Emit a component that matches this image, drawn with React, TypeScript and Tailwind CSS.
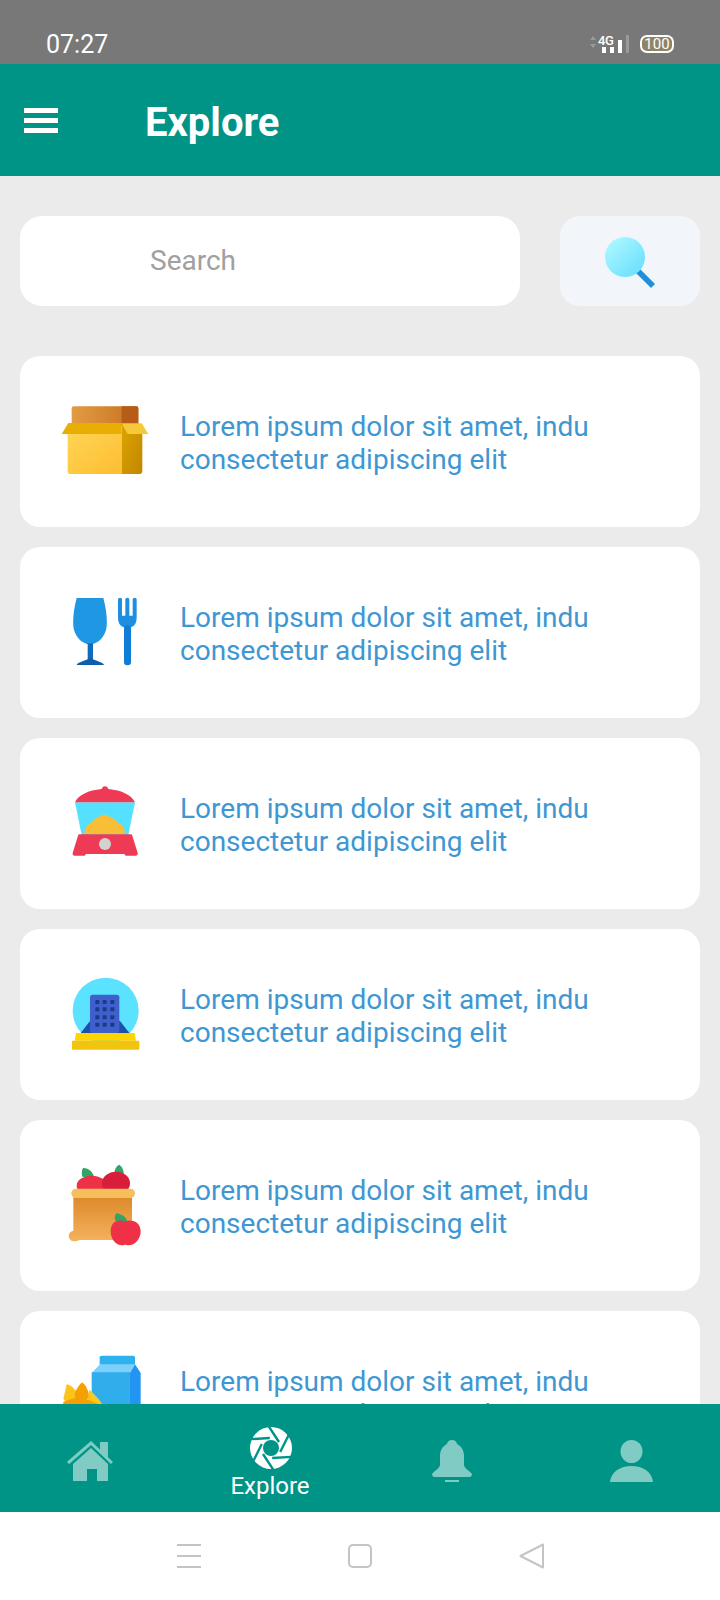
import { FC, ReactNode } from "react";

const LOREM_1 = "Lorem ipsum dolor sit amet, indu";
const LOREM_2 = "consectetur adipiscing elit";

const IconFrame: FC<{ view: string; children: ReactNode }> = ({ view, children }) => (
  <svg viewBox={view} className="h-[90px] w-[110px] shrink-0 blur-[0.5px]">
    {children}
  </svg>
);

const BoxIcon = () => (
  <IconFrame view="30 54 330 270">
    <defs>
      <linearGradient id="boxBack" x1="0" x2="1" y1="0" y2="0">
        <stop offset="0" stopColor="#e29c43" />
        <stop offset="1" stopColor="#c8711f" />
      </linearGradient>
      <linearGradient id="boxFront" x1="0" x2="1" y1="0" y2="1">
        <stop offset="0" stopColor="#ffd555" />
        <stop offset="1" stopColor="#fdbd30" />
      </linearGradient>
      <linearGradient id="boxSide" x1="0" x2="1" y1="0" y2="1">
        <stop offset="0" stopColor="#dca500" />
        <stop offset="1" stopColor="#c28600" />
      </linearGradient>
    </defs>
    <path d="M95 140V88q0-6 6-6h188q6 0 6 6v52z" fill="url(#boxBack)" />
    <path d="M245 82h44q6 0 6 6v52h-50z" fill="#b75b18" />
    <path d="M83 160h162v125H93q-10 0-10-10z" fill="url(#boxFront)" />
    <path d="M245 135h62v140q0 10-10 10h-52z" fill="url(#boxSide)" />
    <path d="M65 165l20-33h160v33z" fill="#e9ae04" />
    <path d="M245 133h60l20 32h-62z" fill="#f5c93a" />
  </IconFrame>
);

const DiningIcon = () => (
  <IconFrame view="0 10 330 270">
    <path d="M80 40h80c8 30 12 60 10 85-3 30-25 53-50 55-25-2-47-25-50-55-2-25 2-55 10-85z" fill="#1f97e2" />
    <rect x="113" y="176" width="16" height="50" fill="#0f6cbc" />
    <path d="M80 241c0-8 25-12 41-22 16 10 41 14 41 22z" fill="#0d5fab" />
    <path d="M204 44q0-5 6-5t6 5v49h10V44q0-5 6-5t6 5v49h10V44q0-5 6-5t6 5v56q0 22-17 28h-22q-17-6-17-28z" fill="#1e8fe0" />
    <rect x="222" y="122" width="21" height="120" rx="10" fill="#0f7dd6" />
  </IconFrame>
);

const SteamerIcon = () => (
  <IconFrame view="0 12 330 270">
    <path d="M75 82l20 98h140l20-98z" fill="#56e0ff" />
    <path d="M104 178c-2-16 6-30 20-34 4-12 18-14 24-20 8-6 22-6 30 0 6 6 20 8 26 20 14 4 22 18 20 34z" fill="#f8be36" />
    <path d="M75 82c10-22 40-36 80-40 2-6 6-8 10-8s8 2 10 8c40 4 70 18 80 40z" fill="#ee3a54" />
    <path d="M88 178h154q4 0 5 4l16 52q1 8-6 8h-30l-4-5H108l-4 5H74q-7 0-6-8l16-52q1-4 4-4z" fill="#ee3a54" />
    <circle cx="165" cy="207" r="18" fill="#d2d2d2" />
  </IconFrame>
);

const GlobeIcon = () => (
  <IconFrame view="0 16 330 270">
    <circle cx="167" cy="138" r="99" fill="#5ae2ff" />
    <path d="M92 205l28-36h90l28 36z" fill="#1f4fa8" />
    <rect x="120" y="90" width="88" height="115" rx="8" fill="#3f60cc" />
    {[112, 134, 158, 180].map((y) =>
      [142, 164, 187].map((x) => (
        <rect key={`${x}-${y}`} x={x - 6} y={y - 6} width="12" height="12" rx="2" fill="#1c3a85" />
      )),
    )}
    <path d="M78 205h176l4 23H74z" fill="#ffd500" />
    <path d="M66 228h202v24q0 3-3 3H69q-3 0-3-3z" fill="#f1c40f" />
  </IconFrame>
);

const ApplesIcon = () => (
  <IconFrame view="0 21 330 270">
    <defs>
      <linearGradient id="sack" x1="0" x2="0" y1="0" y2="1">
        <stop offset="0" stopColor="#dd8a2c" />
        <stop offset="1" stopColor="#f5b25f" />
      </linearGradient>
    </defs>
    <path d="M97 68c-4-14 0-24 3-26 16 0 32 14 32 30z" fill="#2fa568" />
    <path d="M194 64c-4-14 6-30 14-32 12 8 16 26 12 40z" fill="#2fa568" />
    <ellipse cx="125" cy="95" rx="45" ry="30" fill="#ee3146" />
    <ellipse cx="198" cy="88" rx="42" ry="35" fill="#d81e3a" />
    <path d="M70 130h176v128H88q-6 4-16 4-14 0-16-16 0-12 14-16z" fill="url(#sack)" />
    <rect x="64" y="104" width="191" height="28" rx="14" fill="#f5c05c" />
    <path d="M196 200c-4-10 0-20 4-22 12 2 30 10 32 26z" fill="#2fa568" />
    <path d="M182 232c0-26 18-38 44-30 22-8 46 4 46 30 0 24-18 42-36 42-6 0-8-2-10-2s-6 2-10 2c-18 0-34-18-34-42z" fill="#ee3146" />
  </IconFrame>
);

const CartonIcon = () => (
  <IconFrame view="30 37 330 270">
    <rect x="179" y="48" width="106" height="30" rx="5" fill="#2fb1ee" />
    <path d="M180 74h105l-15 26H155z" fill="#7dd0fb" />
    <path d="M155 98h115v210H155z" fill="#30aeec" />
    <path d="M270 100l15-26 17 26v208h-32z" fill="#2295f3" />
    <path d="M80 134c14 2 28 16 34 34l-30 24-14-14z" fill="#fcc419" />
    <path d="M126 128c12 8 20 26 22 46l-40 22-4-34c4-12 12-24 22-34z" fill="#f59f00" />
    <path d="M148 150c14 12 32 30 42 50h-50z" fill="#fdc81e" />
    <path d="M70 186l50-16 70 30v40H70z" fill="#f59f00" />
  </IconFrame>
);

const ICONS = [BoxIcon, DiningIcon, SteamerIcon, GlobeIcon, ApplesIcon, CartonIcon];

const ExploreCard: FC<{ Icon: FC }> = ({ Icon }) => (
  <div className="flex h-[171px] shrink-0 items-center rounded-[20px] bg-white pl-[30px]">
    <Icon />
    <p className="ml-[20px] mt-[2px] text-[28px] leading-[33px] text-[#3e97d2]">
      {LOREM_1}
      <br />
      {LOREM_2}
    </p>
  </div>
);

const StatusBar = () => (
  <div className="flex h-[64px] shrink-0 items-start justify-between bg-[#787878] px-[46px] pt-[30px]">
    <span className="text-[25px] leading-[30px] text-white">07:27</span>
    <div className="flex items-start pt-[5px]">
      <svg viewBox="0 0 6 12" className="mr-[2px] mt-[1px] h-[12px] w-[6px]">
        <path d="M3 0l3 4H0zM3 12L0 8h6z" fill="#9a9a9a" />
      </svg>
      <div className="relative h-[18px] w-[31px]">
        <span className="absolute left-0 top-0 text-[13px] font-medium leading-[12px] tracking-tight text-white">4G</span>
        <div className="absolute bottom-0 left-[4px] flex items-end gap-[4px]">
          <div className="h-[6px] w-[4px] bg-white" />
          <div className="h-[6px] w-[4px] bg-white" />
          <div className="h-[13px] w-[4px] bg-white" />
          <div className="h-[18px] w-[3px] bg-[#9a9a9a]" />
        </div>
      </div>
      <div className="ml-[11px] flex h-[18px] w-[34px] items-center justify-center rounded-[7px] border-2 border-white bg-[#8f8467] text-[15px] leading-none text-white">
        100
      </div>
    </div>
  </div>
);

const Header = () => (
  <header className="flex h-[112px] shrink-0 items-center bg-[#009486] pl-[24px]">
    <div className="flex w-[34px] flex-col gap-[5px]">
      <div className="h-[5px] bg-white" />
      <div className="h-[5px] bg-white" />
      <div className="h-[5px] bg-white" />
    </div>
    <h1 className="ml-[87px] mt-[6px] text-[40px] font-bold leading-none text-white">Explore</h1>
  </header>
);

const SearchRow = () => (
  <div className="flex h-[90px] shrink-0 justify-between">
    <div className="flex w-[500px] items-center rounded-[22px] bg-white pl-[130px] text-[28px] text-[#a0a0a0]">
      Search
    </div>
    <button type="button" className="flex w-[140px] items-center justify-center rounded-[20px] bg-[#f2f6fa]">
      <svg viewBox="0 0 80 70" className="h-[70px] w-[80px] blur-[0.5px]">
        <defs>
          <linearGradient id="lens" x1="0" x2="1" y1="0" y2="1">
            <stop offset="0" stopColor="#b4fbff" />
            <stop offset="1" stopColor="#62dcff" />
          </linearGradient>
        </defs>
        <path d="M50 43l15 15-4 4-15-15z" fill="#1e90d8" />
        <circle cx="35" cy="31" r="20" fill="url(#lens)" />
      </svg>
    </button>
  </div>
);

const ApertureIcon = () => {
  const blades = [0, 60, 120, 180, 240, 300];
  return (
    <svg viewBox="0 0 44 42" className="ml-[2px] h-[42px] w-[44px]">
      <circle cx="22" cy="21" r="21" fill="white" />
      <g stroke="#009486" strokeWidth="2.4">
        {blades.map((a) => (
          <line key={a} x1="19.5" y1="-1" x2="30" y2="15" transform={`rotate(${a} 22 21)`} />
        ))}
      </g>
      <circle cx="22" cy="21" r="8" fill="#009486" />
    </svg>
  );
};

const NavBar = () => (
  <nav className="grid h-[108px] shrink-0 grid-cols-4 bg-[#009486]">
    <div className="flex justify-center pt-[36px]">
      <svg viewBox="0 0 46 42" className="h-[42px] w-[46px]" fill="#80cbc4">
        <path d="M33 2h8v16l-8-7z" />
        <path d="M1 23L24 3l21 20" fill="none" stroke="#80cbc4" strokeWidth="3" />
        <path d="M24 8l17 16v17H30V29H20v12H6V24z" />
      </svg>
    </div>
    <div className="flex flex-col items-center pt-[23px]">
      <ApertureIcon />
      <span className="mt-[3px] text-[24px] leading-[28px] text-white">Explore</span>
    </div>
    <div className="flex justify-center pl-[4px] pt-[36px]">
      <svg viewBox="0 0 40 42" className="h-[42px] w-[40px]" fill="#80cbc4">
        <path d="M20 0c3 0 5 2 5 4 4 2 7 6 7 12v9c0 3 7 7 8 9 0 2-1 3-3 3H3c-2 0-3-1-3-3 1-2 8-6 8-9v-9c0-6 3-10 7-12 0-2 2-4 5-4z" />
        <rect x="13" y="40" width="14" height="2" />
      </svg>
    </div>
    <div className="flex justify-center pl-[2px] pt-[36px]">
      <svg viewBox="0 0 43 42" className="h-[42px] w-[43px]" fill="#80cbc4">
        <ellipse cx="21.5" cy="11.5" rx="11" ry="11.5" />
        <path d="M0 42c1-10 10-16 21.5-16S42 32 43 42z" />
      </svg>
    </div>
  </nav>
);

const SystemNav = () => (
  <div className="flex h-[88px] shrink-0 items-center justify-center gap-[147px] bg-white pb-[1px]">
    <div className="flex w-[24px] flex-col gap-[9px]">
      <div className="h-[2px] bg-[#c4c4c4]" />
      <div className="h-[2px] bg-[#c4c4c4]" />
      <div className="h-[2px] bg-[#c4c4c4]" />
    </div>
    <div className="h-[24px] w-[24px] rounded-[5px] border-2 border-[#c4c4c4]" />
    <svg viewBox="0 0 25 26" className="h-[26px] w-[25px]" fill="none" stroke="#c4c4c4" strokeWidth="2" strokeLinejoin="round">
      <path d="M24 1.5v23L1.5 13z" />
    </svg>
  </div>
);

export default function App() {
  return (
    <div className="flex h-[1600px] w-[720px] flex-col overflow-hidden bg-[#ebebeb] font-['Roboto',sans-serif]">
      <StatusBar />
      <Header />
      <main className="flex min-h-0 flex-1 flex-col gap-[20px] overflow-hidden px-[20px] pt-[40px]">
        <div className="mb-[30px]">
          <SearchRow />
        </div>
        {ICONS.map((Icon, i) => (
          <ExploreCard key={i} Icon={Icon} />
        ))}
      </main>
      <NavBar />
      <SystemNav />
    </div>
  );
}
